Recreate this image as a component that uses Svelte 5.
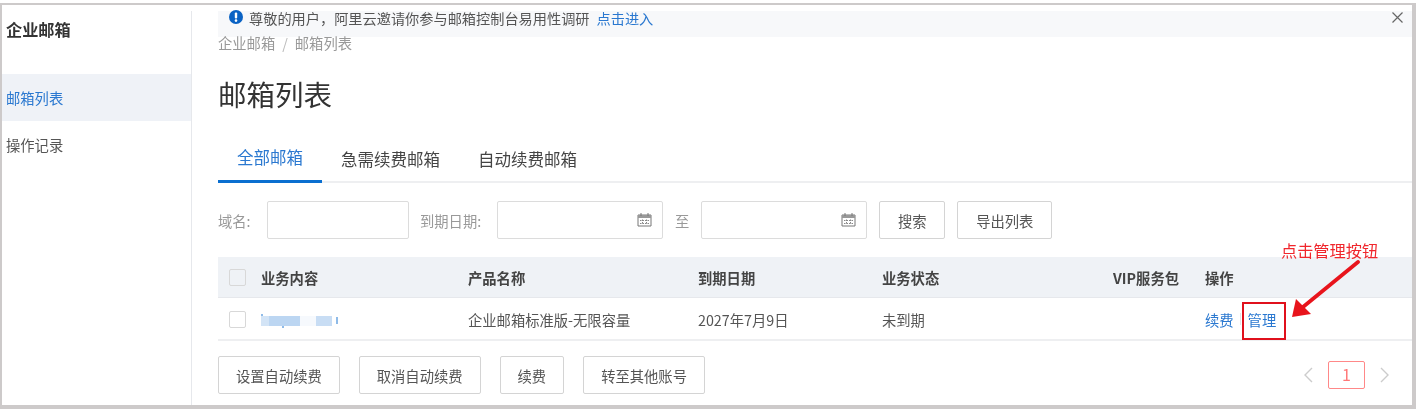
<script>
  const tabs = ['全部邮箱', '急需续费邮箱', '自动续费邮箱'];
  const columns = ['业务内容', '产品名称', '到期日期', '业务状态', 'VIP服务包', '操作'];
  const batchActions = ['设置自动续费', '取消自动续费', '续费', '转至其他账号'];
</script>

<div class="frame">
  <aside class="sidebar">
    <h2>企业邮箱</h2>
    <nav>
      <div class="nav-item active">邮箱列表</div>
      <div class="nav-item">操作记录</div>
    </nav>
  </aside>

  <main class="main">
    <div class="notice">
      <svg class="notice-icon" width="14" height="14" viewBox="0 0 14 14">
        <circle cx="7" cy="7" r="7" fill="#0a62c4" />
        <rect x="5.8" y="2.5" width="2.4" height="6" rx="1" fill="#fff" />
        <circle cx="7" cy="10.6" r="1.3" fill="#fff" />
      </svg>
      <span>尊敬的用户，阿里云邀请你参与邮箱控制台易用性调研</span>
      <a href="#survey" class="link">点击进入</a>
      <svg class="close" width="11" height="11" viewBox="0 0 11 11">
        <path d="M.5.5l10 10M10.5.5l-10 10" stroke="#666" stroke-width="1.2" fill="none" />
      </svg>
    </div>

    <div class="crumbs">企业邮箱<span class="slash">/</span>邮箱列表</div>
    <h1>邮箱列表</h1>

    <div class="tabs">
      {#each tabs as tab, i}
        <div class="tab" class:current={i === 0}>{tab}</div>
      {/each}
    </div>

    <div class="filters">
      <span class="label domain-label">域名:</span>
      <div class="input domain"></div>
      <span class="label date-label">到期日期:</span>
      <div class="input date">
        {@render calendar()}
      </div>
      <span class="label to">至</span>
      <div class="input date">
        {@render calendar()}
      </div>
      <button class="btn search">搜索</button>
      <button class="btn export">导出列表</button>
    </div>

    <div class="table">
      <div class="row head">
        <span class="check"></span>
        {#each columns as col}
          <span>{col}</span>
        {/each}
      </div>
      <div class="row body">
        <span class="check"></span>
        <span class="masked">
          <i class="m1"></i><i class="m2"></i><i class="m3"></i><i class="m4"></i><i class="m5"></i>
        </span>
        <span>企业邮箱标准版-无限容量</span>
        <span>2027年7月9日</span>
        <span>未到期</span>
        <span></span>
        <span class="ops">
          <a href="#renew" class="link">续费</a>
          <i class="sep"></i>
          <a href="#manage" class="link">管理</a>
        </span>
      </div>
    </div>

    <div class="footer">
      {#each batchActions as action}
        <button class="btn batch">{action}</button>
      {/each}
      <div class="pager">
        <svg width="10" height="16" viewBox="0 0 10 16"><path d="M9 1L2 8l7 7" stroke="#ccc" stroke-width="1.4" fill="none" /></svg>
        <span class="page">1</span>
        <svg width="10" height="16" viewBox="0 0 10 16"><path d="M1 1l7 7-7 7" stroke="#ccc" stroke-width="1.4" fill="none" /></svg>
      </div>
    </div>
  </main>

  <!-- annotation drawn over the screenshot -->
  <div class="note-text">点击管理按钮</div>
  <div class="note-box"></div>
  <svg class="note-arrow" width="80" height="66" viewBox="0 0 80 66">
    <path d="M67 2L12 47" stroke="#e8141c" stroke-width="3.8" stroke-linecap="round" />
    <path d="M1 57L5 39 20 54z" fill="#e8141c" />
  </svg>
</div>

{#snippet calendar()}
  <svg class="cal" width="15" height="15" viewBox="0 0 15 15">
    <path d="M1 3h13v11H1z" fill="none" stroke="#777" />
    <path d="M1 3h13v3H1z" fill="#999" />
    <path d="M4 1v3M11 1v3" stroke="#777" />
    <path d="M3 8.5h9M3 11.5h9M5.5 7.5v5M9.5 7.5v5" stroke="#888" stroke-dasharray="1.5 1" />
  </svg>
{/snippet}

<style>
  :global(body) {
    background: #fff;
  }

  .frame {
    position: relative;
    display: flex;
    box-sizing: border-box;
    width: 1416px;
    height: 406px;
    margin-top: 3px;
    border: solid #cdcaca;
    border-width: 2px 4px 4px 2px;
    background: #fff;
    overflow: hidden;
    font-family: "Noto Sans CJK SC", "Liberation Sans", sans-serif;
    font-size: 14.3px;
    color: #444;
    filter: blur(0.5px);
  }

  .sidebar {
    flex: none;
    width: 189px;
    margin-top: 6px;
    border-right: 1px solid #e6e8ec;
  }

  .sidebar h2 {
    margin: 0;
    padding: 6px 0 0 4px;
    font-size: 16.2px;
    line-height: 24px;
    font-weight: 700;
    color: #333;
  }

  nav {
    margin-top: 33px;
  }

  .nav-item {
    height: 47px;
    padding-left: 4px;
    line-height: 47px;
    color: #555;
  }

  .nav-item.active {
    background: #eff2f7;
    color: #2a78d0;
  }

  .main {
    flex: 1;
    min-width: 0;
    padding: 6px 0 0 26px;
  }

  .notice {
    display: flex;
    align-items: flex-start;
    height: 26px;
    background: #f7f8fa;
    font-size: 14.2px;
    line-height: 14px;
    color: #555;
  }

  .notice-icon {
    flex: none;
    margin: -1px 6px 0 11px;
  }

  .notice .link {
    margin-left: 7px;
  }

  .close {
    margin: 1px 9px 0 auto;
  }

  .link {
    color: #2a78d0;
    text-decoration: none;
  }

  .crumbs {
    height: 14px;
    margin-top: -1px;
    line-height: 14px;
    color: #999;
  }

  .slash {
    margin: 0 7px;
    color: #bbb;
  }

  h1 {
    margin: 24px 0 0;
    font-size: 28.5px;
    line-height: 40px;
    font-weight: 400;
    color: #333;
  }

  .tabs {
    display: flex;
    box-sizing: border-box;
    height: 48px;
    margin-top: 21px;
    border-bottom: 2px solid #eeeff1;
  }

  .tab {
    box-sizing: border-box;
    height: 48px;
    padding: 12px 19px 0;
    font-size: 16.5px;
    line-height: 24px;
    color: #444;
  }

  .tab.current {
    padding-top: 10px;
    border-bottom: 3px solid #0a6fd0;
    color: #2a78d0;
  }

  .filters {
    display: flex;
    align-items: center;
    height: 38px;
    margin-top: 18px;
  }

  .label {
    color: #999;
  }

  .input {
    display: flex;
    align-items: center;
    justify-content: flex-end;
    box-sizing: border-box;
    height: 38px;
    border: 1px solid #dcdcdc;
    border-radius: 2px;
  }

  .domain-label {
    width: 35px;
    margin-right: 14px;
  }

  .domain {
    width: 142px;
  }

  .date-label {
    width: 64px;
    margin: 0 13px 0 11px;
  }

  .date {
    width: 166px;
    padding-right: 10px;
  }

  .to {
    margin: 0 12px;
  }

  .btn {
    box-sizing: border-box;
    height: 38px;
    border: 1px solid #d4d4d4;
    border-radius: 2px;
    background: #fff;
    font: inherit;
    color: #555;
  }

  .search {
    width: 66px;
    margin-left: 12px;
  }

  .export {
    width: 95px;
    margin-left: 12px;
  }

  .row {
    display: grid;
    grid-template-columns: 43px 207px 230px 184px 231px 92px 1fr;
    align-items: center;
  }

  .head {
    height: 41px;
    background: #eff2f6;
    border-bottom: 1px solid #e6e8ec;
    box-sizing: border-box;
    font-weight: 700;
    color: #444;
  }

  .body {
    height: 43px;
    padding-top: 1px;
    border-bottom: 2px solid #eeeff1;
    box-sizing: border-box;
    color: #555;
  }

  .table {
    margin-top: 18px;
  }

  .check {
    box-sizing: border-box;
    width: 17px;
    height: 17px;
    margin-left: 11px;
    border: 1px solid #d8d8d8;
    border-radius: 2px;
    background: #fff;
  }

  .head .check {
    background: #eff2f6;
  }

  .masked {
    display: flex;
    align-items: center;
    height: 16px;
    margin-top: 3px;
  }

  .masked i {
    display: block;
    height: 10px;
  }

  .m1 {
    position: relative;
    width: 8px;
    background: #d3e4f6;
  }

  .m1::before {
    content: "";
    position: absolute;
    left: 0;
    top: -2px;
    width: 2px;
    height: 2px;
    background: #8fbbe8;
  }

  .m2 {
    position: relative;
    width: 31px;
    background: #bcd6f2;
  }

  .m2::after {
    content: "";
    position: absolute;
    left: 13px;
    bottom: -2px;
    width: 2px;
    height: 2px;
    background: #8fbbe8;
  }

  .m3 {
    width: 16px;
    background: #f6f9fd;
  }

  .m4 {
    width: 16px;
    background: #c8ddf4;
  }

  .masked .m5 {
    width: 2px;
    height: 7px;
    margin-left: 4px;
    background: #8fbbe8;
  }

  .ops {
    display: flex;
    align-items: center;
    white-space: nowrap;
  }

  .sep {
    width: 1px;
    height: 12px;
    margin: 0 7px 0 6px;
    background: #e4e6ea;
  }

  .footer {
    display: flex;
    align-items: center;
    gap: 19px;
    margin-top: 15px;
  }

  .batch {
    padding: 0 17px;
  }

  .pager {
    display: flex;
    align-items: center;
    gap: 15px;
    margin-left: auto;
    margin-right: 22px;
  }

  .page {
    box-sizing: border-box;
    width: 37px;
    height: 28px;
    border: 1.5px solid #f88;
    border-radius: 2px;
    font-size: 16px;
    line-height: 25px;
    text-align: center;
    color: #f77;
  }

  .cal {
    display: block;
    margin-top: -2px;
  }

  .note-text {
    position: absolute;
    left: 1279px;
    top: 233px;
    font-size: 16.2px;
    line-height: 24px;
    color: #f0262c;
  }

  .note-box {
    position: absolute;
    left: 1240px;
    top: 297px;
    box-sizing: border-box;
    width: 44px;
    height: 38px;
    border: 2px solid #e0101c;
  }

  .note-arrow {
    position: absolute;
    left: 1289px;
    top: 255px;
  }
</style>
